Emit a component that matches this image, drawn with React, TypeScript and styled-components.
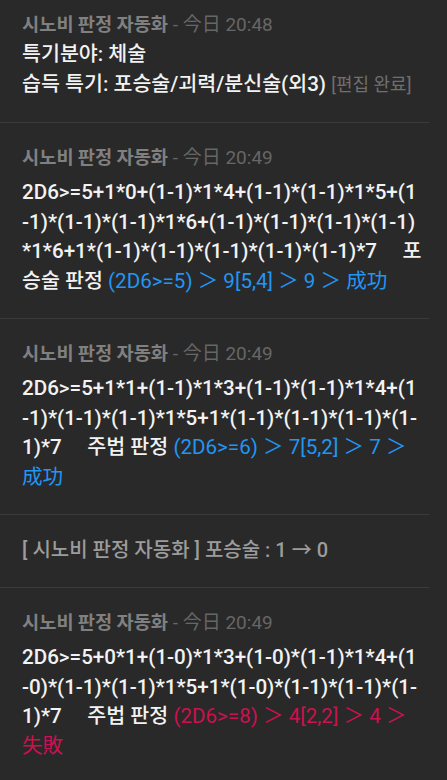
import styled, { createGlobalStyle } from "styled-components";

const GlobalStyle = createGlobalStyle`
  html, body {
    margin: 0;
    background: #292929;
  }
  body {
    font-family: Roboto, "Noto Sans CJK KR", sans-serif;
    color: #f2f2f2;
  }
`;

const Log = styled.main`
  width: 429px;
  display: flex;
  flex-direction: column;
`;

const Message = styled.section<{ $compact?: boolean }>`
  display: flex;
  flex-direction: column;
  gap: ${(p) => (p.$compact ? "0" : "5px")};
  padding: ${(p) => (p.$compact ? "10px 6px 23px 22px" : "20px 6px 22px 22px")};
  border-bottom: 1px solid #3b3b3b;

  &:last-child {
    border-bottom: none;
  }
`;

const Header = styled.div`
  font-size: 19px;
  line-height: 30px;
  height: 30px;
  white-space: nowrap;
`;

const Name = styled.span`
  font-family: "Noto Sans CJK KR", sans-serif;
  font-size: 18.7px;
  line-height: 0;
  font-weight: 700;
  color: #808080;
`;

const Stamp = styled.span`
  color: #666666;
`;

const Body = styled.div`
  font-size: 20.6px;
  line-height: 29.5px;
  font-weight: 500;
  white-space: pre-wrap;
  word-break: break-all;
`;

const Edited = styled.span`
  font-size: 18px;
  font-weight: 400;
  color: #6f6f6f;
`;

const Result = styled.span<{ $tone: "success" | "failure" }>`
  font-weight: 400;
  color: ${(p) => (p.$tone === "success" ? "#2196f3" : "#cc1150")};
`;

const SystemLine = styled.div`
  padding: 20px 6px 22px 22px;
  border-bottom: 1px solid #3b3b3b;
  font-size: 20px;
  line-height: 30px;
  font-weight: 500;
  color: #9c9c9c;
`;

type Roll = {
  time: string;
  formula: string;
  label: string;
  result: string;
  tone: "success" | "failure";
};

const rolls: Roll[] = [
  {
    time: "20:49",
    formula:
      "2D6>=5+1*0+(1-1)*1*4+(1-1)*(1-1)*1*5+(1-1)*(1-1)*(1-1)*1*6+(1-1)*(1-1)*(1-1)*(1-1)*1*6+1*(1-1)*(1-1)*(1-1)*(1-1)*(1-1)*7",
    label: "포승술 판정",
    result: "(2D6>=5) ＞ 9[5,4] ＞ 9 ＞ 成功",
    tone: "success",
  },
  {
    time: "20:49",
    formula:
      "2D6>=5+1*1+(1-1)*1*3+(1-1)*(1-1)*1*4+(1-1)*(1-1)*(1-1)*1*5+1*(1-1)*(1-1)*(1-1)*(1-1)*7",
    label: "주법 판정",
    result: "(2D6>=6) ＞ 7[5,2] ＞ 7 ＞ 成功",
    tone: "success",
  },
];

const lastRoll: Roll = {
  time: "20:49",
  formula:
    "2D6>=5+0*1+(1-0)*1*3+(1-0)*(1-1)*1*4+(1-0)*(1-1)*(1-1)*1*5+1*(1-0)*(1-1)*(1-1)*(1-1)*7",
  label: "주법 판정",
  result: "(2D6>=8) ＞ 4[2,2] ＞ 4 ＞ 失敗",
  tone: "failure",
};

const SENDER = "시노비 판정 자동화";

const MessageHeader = ({ time }: { time: string }) => (
  <Header>
    <Name>{SENDER}</Name>
    <Stamp> - 今日 {time}</Stamp>
  </Header>
);

const RollMessage = ({ roll }: { roll: Roll }) => (
  <Message>
    <MessageHeader time={roll.time} />
    <Body>
      {roll.formula}
      {"     "}
      {roll.label} <Result $tone={roll.tone}>{roll.result}</Result>
    </Body>
  </Message>
);

const App = () => {
  return (
    <>
      <GlobalStyle />
      <Log>
        <Message $compact>
          <MessageHeader time="20:48" />
          <Body>
            {"특기분야: 체술\n습득 특기: 포승술/괴력/분신술(외3) "}
            <Edited>[편집 완료]</Edited>
          </Body>
        </Message>
        {rolls.map((roll, i) => (
          <RollMessage key={i} roll={roll} />
        ))}
        <SystemLine>[ 시노비 판정 자동화 ] 포승술 : 1 → 0</SystemLine>
        <RollMessage roll={lastRoll} />
      </Log>
    </>
  );
};

export default App;
